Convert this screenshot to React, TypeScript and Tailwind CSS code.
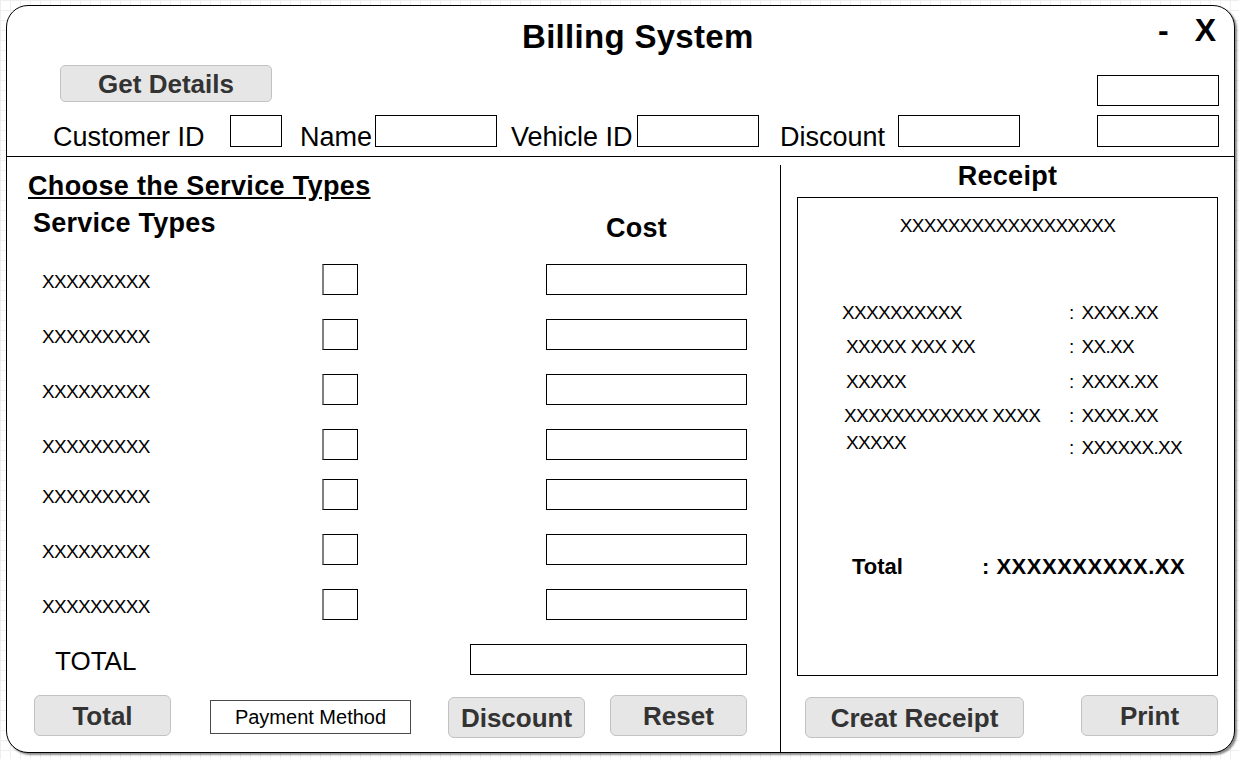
import React from 'react'

const Btn = ({ label, className }: { label: string; className: string }) => (
  <button
    className={`flex shrink-0 items-center justify-center border border-[#c2c2c2] bg-[#e6e6e6] text-[26px] font-bold leading-none text-[#333] ${className}`}
  >
    {label}
  </button>
)

const Box = ({ className }: { className: string }) => (
  <div className={`shrink-0 border border-black bg-white ${className}`} />
)

const services = ['mt-0', 'mt-[24px]', 'mt-[24px]', 'mt-[24px]', 'mt-[19px]', 'mt-[24px]', 'mt-[24px]']

const receiptRows = [
  { label: 'XXXXXXXXXX', pl: 'pl-[44px]', value: 'XXXX.XX', mt: 'mt-0', vmt: 'mt-0' },
  { label: 'XXXXX XXX XX', pl: 'pl-[48px]', value: 'XX.XX', mt: 'mt-[12px]', vmt: 'mt-0' },
  { label: 'XXXXX', pl: 'pl-[48px]', value: 'XXXX.XX', mt: 'mt-[13px]', vmt: 'mt-0' },
  { label: 'XXXXXXXXXXXX XXXX', pl: 'pl-[46px]', value: 'XXXX.XX', mt: 'mt-[12px]', vmt: 'mt-0' },
  { label: 'XXXXX', pl: 'pl-[48px]', value: 'XXXXXX.XX', mt: 'mt-[5px]', vmt: 'mt-[5px]' },
]

const xText = 'text-[19px] leading-[22px] tracking-[-0.7px] whitespace-pre'

export default function App() {
  return (
    <div className="h-[759px] w-[1239px] overflow-hidden bg-white bg-[linear-gradient(to_right,#efefef_1px,transparent_1px),linear-gradient(to_bottom,#efefef_1px,transparent_1px)] bg-[size:10px_10px] pl-[6px] pt-[5px] font-['Liberation_Sans',Arial,sans-serif] text-black">
      <div className="flex h-[748px] w-[1229px] flex-col rounded-[22px] border border-black bg-white shadow-[2px_2px_2px_rgba(0,0,0,0.45)]">
        {/* header */}
        <div className="h-[151px] shrink-0 border-b border-black">
          <div className="flex h-[50px] items-start">
            <h1 className="ml-[515px] mt-[12px] text-[33px] font-bold leading-[38px] tracking-[0.3px]">Billing System</h1>
            <div className="ml-auto mr-[18px] mt-[6px] flex items-start gap-[26px] text-[32px] font-bold leading-[36px]">
              <span>-</span>
              <span>X</span>
            </div>
          </div>
          <div className="flex">
            <div>
              <Btn label="Get Details" className="ml-[53px] mt-[9px] h-[37px] w-[212px] rounded-[5px]" />
              <div className="mt-[13px] flex items-end text-[27px] leading-[19px] whitespace-nowrap">
                <span className="ml-[46px] w-[154px]">Customer ID</span>
                <Box className="ml-[23px] h-[32px] w-[52px]" />
                <span className="ml-[18px] w-[71px]">Name</span>
                <Box className="ml-[4px] h-[32px] w-[122px]" />
                <span className="ml-[14px] w-[123px]">Vehicle ID</span>
                <Box className="ml-[3px] h-[32px] w-[122px]" />
                <span className="ml-[21px] w-[107px]">Discount</span>
                <Box className="ml-[11px] h-[32px] w-[122px]" />
              </div>
            </div>
            <div className="ml-auto mr-[15px] mt-[19px] flex flex-col gap-[9px]">
              <Box className="h-[31px] w-[122px]" />
              <Box className="h-[32px] w-[122px]" />
            </div>
          </div>
        </div>

        {/* body */}
        <div className="flex min-h-0 flex-1">
          <div className="w-[773px] shrink-0">
            <h2 className="ml-[21px] mt-[14px] text-[27px] font-bold leading-[30px] tracking-[0.35px] underline">Choose the Service Types</h2>
            <div className="mt-[7px] flex items-start text-[27px] font-bold leading-[30px] tracking-[0.25px]">
              <span className="ml-[26px] w-[573px]">Service Types</span>
              <span className="mt-[5px]">Cost</span>
            </div>
            <div className="mt-[21px]">
              {services.map((mt, i) => (
                <div key={i} className={`flex h-[31px] items-start ${mt}`}>
                  <span className={`ml-[35px] mt-[7px] w-[280px] ${xText}`}>XXXXXXXXX</span>
                  <div className="h-[31px] w-[36px] border border-l-2 border-black border-l-[#808080] bg-white" />
                  <Box className="ml-[188px] h-[31px] w-[201px]" />
                </div>
              ))}
            </div>
            <div className="mt-[24px] flex items-start">
              <span className="ml-[48px] mt-[4px] w-[415px] text-[26px] leading-[26px]">TOTAL</span>
              <Box className="h-[31px] w-[277px]" />
            </div>
            <div className="mt-[20px] flex items-start">
              <Btn label="Total" className="ml-[27px] h-[41px] w-[137px] rounded-[6px]" />
              <div className="ml-[39px] mt-[5px] flex h-[34px] w-[201px] items-center justify-center border-[1.5px] border-[#4a4a4a] text-[20px] leading-none">
                Payment Method
              </div>
              <Btn label="Discount" className="ml-[37px] mt-[2px] h-[41px] w-[137px] rounded-[6px]" />
              <Btn label="Reset" className="ml-[25px] h-[41px] w-[137px] rounded-[6px]" />
            </div>
          </div>

          <div className="mt-[8px] w-px shrink-0 bg-black" />

          <div className="flex-1">
            <h2 className="mt-[4px] text-center text-[27px] font-bold leading-[30px] tracking-[0.3px]">Receipt</h2>
            <div className="ml-[16px] mt-[6px] h-[479px] w-[421px] border border-black">
              <p className={`mt-[17px] text-center ${xText}`}>XXXXXXXXXXXXXXXXXX</p>
              <div className="mt-[65px]">
                {receiptRows.map((r, i) => (
                  <div key={i} className={`grid grid-cols-[271px_1fr] items-start ${r.mt} ${xText}`}>
                    <span className={r.pl}>{r.label}</span>
                    <span className={r.vmt}>
                      :<span className="ml-[8px]">{r.value}</span>
                    </span>
                  </div>
                ))}
              </div>
              <div className="mt-[95px] grid grid-cols-[184px_1fr] text-[22px] font-bold leading-[26px]">
                <span className="pl-[54px]">Total</span>
                <span className="tracking-[0.5px]">: XXXXXXXXXX.XX</span>
              </div>
            </div>
            <div className="mt-[19px] flex items-start">
              <Btn label="Creat Receipt" className="ml-[24px] mt-[2px] h-[41px] w-[219px] rounded-[6px]" />
              <Btn label="Print" className="ml-[57px] h-[41px] w-[137px] rounded-[6px]" />
            </div>
          </div>
        </div>
      </div>
    </div>
  )
}
